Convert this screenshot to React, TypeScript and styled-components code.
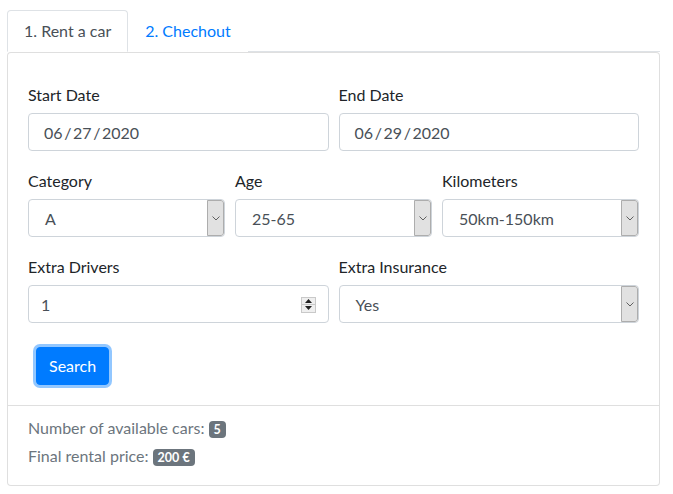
import React from "react";
import styled, { createGlobalStyle } from "styled-components";

const GlobalStyle = createGlobalStyle`
  html, body { margin: 0; padding: 0; background: #fff; }
  body {
    font-family: "Segoe UI", Lato, "Liberation Sans", sans-serif;
    font-size: 16px;
    line-height: 24px;
    color: #212529;
  }
  * { box-sizing: border-box; }
`;

const Page = styled.div`
  padding: 10px 13px 8px 7px;
  width: 673px;
`;

const NavTabs = styled.ul`
  display: flex;
  list-style: none;
  margin: 0;
  padding: 0;
  border-bottom: 1px solid #dee2e6;
`;

const Tab = styled.li<{ $active?: boolean }>`
  margin-bottom: -1px;
  padding: 8px 16px;
  line-height: 24px;
  border: 1px solid transparent;
  border-color: ${(p) => (p.$active ? "#dee2e6 #dee2e6 #fff" : "transparent")};
  border-radius: 4px 4px 0 0;
  background: #fff;
  color: ${(p) => (p.$active ? "#495057" : "#007bff")};
  cursor: pointer;
`;

const Card = styled.div`
  border: 1px solid rgba(0, 0, 0, 0.125);
  border-radius: 4px;
  background: #fff;
`;

const CardBody = styled.form`
  padding: 28px 20px 12px;
`;

const Row = styled.div<{ $cols: number }>`
  display: grid;
  grid-template-columns: repeat(${(p) => p.$cols}, 1fr);
  column-gap: 10px;
  margin-bottom: 16px;
`;

const Group = styled.div`
  display: flex;
  flex-direction: column;
  min-width: 0;
`;

const Label = styled.label`
  display: block;
  padding-top: 2px;
  margin-bottom: 6px;
  line-height: 24px;
`;

const Field = styled.div<{ $pad?: number }>`
  display: flex;
  align-items: center;
  height: 38px;
  border: 1px solid #ced4da;
  border-radius: 4px;
  padding-left: ${(p) => p.$pad ?? 12}px;
  padding-top: 1px;
  color: #495057;
  background: #fff;
  overflow: hidden;
`;

const Value = styled.span<{ $tight?: boolean }>`
  flex: 1;
  white-space: nowrap;
  ${(p) => (p.$tight ? "word-spacing: -2.5px;" : "")}
`;

const ArrowBox = styled.span`
  display: flex;
  align-items: center;
  justify-content: center;
  align-self: stretch;
  width: 17px;
  margin-top: -1px;
  background: #e1e1e1;
  border: 1px solid #adadad;
  border-radius: 0 3px 3px 0;
`;

const Spinner = styled.span`
  display: flex;
  flex-direction: column;
  width: 15px;
  height: 16px;
  margin-right: 12px;
  border: 1px solid #c9c9c9;
  background: #efefef;
`;

const SpinHalf = styled.span<{ $top?: boolean }>`
  flex: 1;
  display: flex;
  align-items: center;
  justify-content: center;
  ${(p) => (p.$top ? "border-bottom: 1px solid #c9c9c9;" : "")}
`;

const Button = styled.button`
  margin: 8px;
  padding: 6px 12px;
  font: inherit;
  line-height: 24px;
  color: #fff;
  background: #007bff;
  border: 1px solid #007bff;
  border-radius: 4px;
  box-shadow: 0 0 0 3px rgba(38, 143, 255, 0.5);
`;

const Footer = styled.div`
  border-top: 1px solid rgba(0, 0, 0, 0.125);
  padding: 10px 20px 13px;
  color: #6c757d;
`;

const Line = styled.div`
  margin-bottom: 4px;
  line-height: 24px;
`;

const Badge = styled.span`
  display: inline-block;
  padding: 2px 5px;
  font-size: 12.5px;
  font-weight: 700;
  line-height: 13px;
  color: #fff;
  background: #6c757d;
  border-radius: 4px;
  vertical-align: 0px;
`;

const Chevron = () => (
  <svg width="8" height="5" viewBox="0 0 8 5">
    <path d="M0.5 0.5 L4 4 L7.5 0.5" fill="none" stroke="#606060" strokeWidth="1" />
  </svg>
);

const Tri = ({ up }: { up?: boolean }) => (
  <svg width="7" height="4" viewBox="0 0 7 4">
    <path d={up ? "M0 4 L3.5 0 L7 4 Z" : "M0 0 L3.5 4 L7 0 Z"} fill="#222" />
  </svg>
);

const Select = ({ value }: { value: string }) => (
  <Field $pad={16}>
    <Value>{value}</Value>
    <ArrowBox>
      <Chevron />
    </ArrowBox>
  </Field>
);

export default function App() {
  return (
    <>
      <GlobalStyle />
      <Page>
        <NavTabs>
          <Tab $active>1. Rent a car</Tab>
          <Tab>2. Chechout</Tab>
        </NavTabs>
        <Card>
          <CardBody onSubmit={(e) => e.preventDefault()}>
            <Row $cols={2}>
              <Group>
                <Label>Start Date</Label>
                <Field $pad={15}>
                  <Value $tight>06 / 27 / 2020</Value>
                </Field>
              </Group>
              <Group>
                <Label>End Date</Label>
                <Field $pad={15}>
                  <Value $tight>06 / 29 / 2020</Value>
                </Field>
              </Group>
            </Row>
            <Row $cols={3}>
              <Group>
                <Label>Category</Label>
                <Select value="A" />
              </Group>
              <Group>
                <Label>Age</Label>
                <Select value="25-65" />
              </Group>
              <Group>
                <Label>Kilometers</Label>
                <Select value="50km-150km" />
              </Group>
            </Row>
            <Row $cols={2}>
              <Group>
                <Label>Extra Drivers</Label>
                <Field $pad={12}>
                  <Value>1</Value>
                  <Spinner>
                    <SpinHalf $top>
                      <Tri up />
                    </SpinHalf>
                    <SpinHalf>
                      <Tri />
                    </SpinHalf>
                  </Spinner>
                </Field>
              </Group>
              <Group>
                <Label>Extra Insurance</Label>
                <Select value="Yes" />
              </Group>
            </Row>
            <Button type="submit">Search</Button>
          </CardBody>
          <Footer>
            <Line>
              Number of available cars: <Badge>5</Badge>
            </Line>
            <Line>
              Final rental price: <Badge>200 €</Badge>
            </Line>
          </Footer>
        </Card>
      </Page>
    </>
  );
}
